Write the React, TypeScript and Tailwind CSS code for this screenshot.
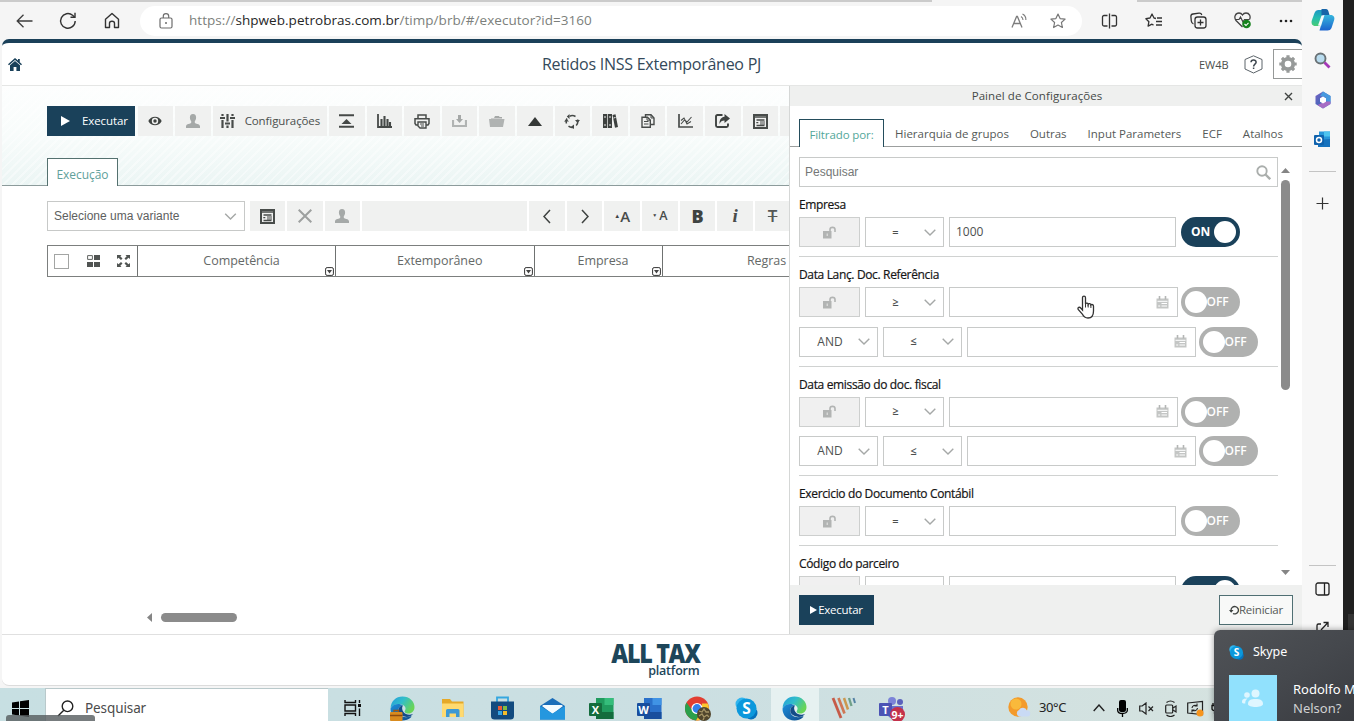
import React from "react";

type P = { children?: React.ReactNode; className?: string; w?: number; h?: number; vb?: string };

function Ic({ children, className = "", w = 16, h, vb }: P) {
  const hh = h ?? w;
  return (
    <svg width={w} height={hh} viewBox={vb ?? `0 0 ${w} ${hh}`} fill="none" className={`block shrink-0 ${className}`}>
      {children}
    </svg>
  );
}

/* ---------- shared icons ---------- */

const UserIcon = () => (
  <Ic w={16}>
    <path d="M8 1C5.8 1 4.8 2.6 4.9 4.6c.1 1.700.6 2.900 1.300 3.700v1.500C5.900 10.800 1 11 1 13.200V15h14v-1.800c0-2.200-4.900-2.400-5.200-3.400V8.300c.7-.8 1.200-2 1.300-3.700C11.200 2.600 10.200 1 8 1z" fill="#a5a9a8" />
  </Ic>
);

const FormIcon = () => (
  <Ic w={15}>
    <rect x="1" y="1" width="13" height="13" stroke="#484c4a" strokeWidth="2" />
    <path d="M1 3h13M3.500 6h8M3.500 11.500h8" stroke="#484c4a" strokeWidth="1.600" />
    <path d="M3.300 8.700h2M7 8h5M7 10h5" stroke="#484c4a" strokeWidth="1.200" />
  </Ic>
);

const Chevron = ({ w = 12 }: { w?: number }) => (
  <Ic w={w} h={7} vb="0 0 12 7">
    <path d="M.700 .700 6 6 11.300 .700" stroke="#a5a8a7" strokeWidth="1.400" />
  </Ic>
);

const LockIcon = () => (
  <Ic w={13} h={13}>
    <path d="M0 5h8.500v7.500H0z" fill="#b2b4b3" />
    <path d="M7 6V3.500C7 .700 12 .700 12 3.500V6" stroke="#b2b4b3" strokeWidth="1.600" />
    <path d="M4.200 7.500v2.500" stroke="#e8e8e8" />
  </Ic>
);

const CalendarIcon = () => (
  <Ic w={13} h={13}>
    <path d="M.500 2.500h12v10H.500z" fill="#c4c6c5" />
    <path d="M3.500 0v3.500M9.500 0v3.500" stroke="#b4b6b5" strokeWidth="1.600" />
    <path d="M1.500 5.300h10M5.500 7.500h5.500M5.500 10h5.500M2.200 10h2" stroke="#fff" strokeWidth="1" />
  </Ic>
);

/* ---------- browser chrome ---------- */

function BrowserBar() {
  return (
    <div className="flex h-[39px] w-[1302px] shrink-0 flex-col">
      <div className="flex h-[2px] justify-between">
        <div className="w-[932px] bg-[#cbcbcb]" />
        <div className="w-[165px] bg-[#cbcbcb]" />
      </div>
      <div className="flex h-[37px] items-center pl-[16px]">
        <Ic w={17} h={14} className="mr-[26px]">
          <path d="M7.500 .800 1.200 7l6.300 6.200M1.200 7H16.500" stroke="#3d3d3d" strokeWidth="1.300" />
        </Ic>
        <Ic w={18} className="mr-[27px]">
          <path d="M16.200 9A7.300 7.300 0 1 1 13.600 3.300L15.500 5" stroke="#333" strokeWidth="1.400" />
          <path d="M16 .800V5.300H11.500" stroke="#333" strokeWidth="1.400" />
        </Ic>
        <Ic w={16} h={17} className="mr-[20px]">
          <path d="M1.500 7.200 8 1.400l6.500 5.800v8.300h-4v-4.300c0-1.400-.700-2-2.500-2s-2.500.600-2.500 2v4.300h-4z" stroke="#333" strokeWidth="1.400" strokeLinejoin="round" />
        </Ic>
        <div className="flex h-[30px] w-[942px] items-center rounded-full bg-white pl-[19px]">
          <Ic w={14} h={16} className="mr-[16px]">
            <rect x="1" y="5" width="12" height="10" rx="1.500" stroke="#6d6d6d" strokeWidth="1.200" />
            <path d="M4.300 5V3.300a2.700 2.700 0 0 1 5.400 0V5" stroke="#6d6d6d" strokeWidth="1.200" />
            <circle cx="7" cy="10" r="1" fill="#6d6d6d" />
          </Ic>
          <div className="w-[822px] whitespace-nowrap font-['Open_Sans',sans-serif] text-[13.500px] tracking-[0.050px] text-[#7c7f7c]">
            https://<span className="text-[#262626]">shpweb.petrobras.com.br</span>/timp/brb/#/executor?id=3160
          </div>
          <Ic w={17} h={16} className="mr-[22px]">
            <path d="M1 14.500 5.600 3.500h.8L11 14.500M2.700 10.500h6.600" stroke="#7d7d7d" strokeWidth="1.300" />
            <path d="M10 3.500c1.400.8 2 2 2 3.500M11.500 1c2.500 1.200 3.500 3.300 3.400 6" stroke="#7d7d7d" strokeWidth="1.100" />
          </Ic>
          <Star />
        </div>
        <div className="ml-[19px] flex items-center gap-[27px]">
          <Ic w={17} h={16}>
            <path d="M6.500 2.500H3A1.500 1.500 0 0 0 1.500 4v7.500A1.500 1.500 0 0 0 3 13h3.500M10.500 2.500H14A1.500 1.500 0 0 1 15.500 4v7.500A1.500 1.500 0 0 1 14 13h-3.500M8.500 .500v15" stroke="#333" strokeWidth="1.300" />
          </Ic>
          <Ic w={18} h={16}>
            <path d="M11 5.500 9 5 7 1 5 5 .900 5.700l3 3-.8 4.500L7 11.200l1.500.9M12 5h5M11 8.500h6M11 12h6" stroke="#333" strokeWidth="1.300" strokeLinejoin="round" />
          </Ic>
          <Ic w={17} h={17}>
            <path d="M3.500 12C2 11.500 1.500 10.500 1.300 9L.900 4.500C.800 3 1.500 2.200 3 2l6-.9c1.500-.2 2.400.4 2.800 1.900" stroke="#333" strokeWidth="1.300" />
            <rect x="5" y="5" width="11" height="11" rx="2.500" stroke="#333" strokeWidth="1.300" />
            <path d="M10.500 7.500v6M7.500 10.500h6" stroke="#333" strokeWidth="1.300" />
          </Ic>
          <Ic w={18} h={17}>
            <path d="M8.500 15 2 8.500C-.500 5 1.500 1 5 1c1.600 0 2.800.8 3.500 2C9.200 1.800 10.400 1 12 1c3.500 0 5 3.500 3.500 6.500" stroke="#444" strokeWidth="1.300" />
            <path d="M1 7.500h4L6.500 5l2.500 5 1.500-2.500h5" stroke="#444" strokeWidth="1.200" />
            <circle cx="12.500" cy="12" r="4.300" fill="#16821d" />
            <path d="m10.500 12 1.500 1.500 2.500-2.700" stroke="#fff" strokeWidth="1.100" />
          </Ic>
          <Ic w={14} h={4}>
            <g fill="#222"><circle cx="2" cy="2" r="1.300" /><circle cx="7" cy="2" r="1.300" /><circle cx="12" cy="2" r="1.300" /></g>
          </Ic>
        </div>
      </div>
    </div>
  );
}

const Star = () => (
  <Ic w={16}>
    <path d="m8 1 2.100 4.600 5 .5-3.700 3.400 1 5L8 12l-4.400 2.500 1-5L.900 6.100l5-.5z" stroke="#777" strokeWidth="1.200" strokeLinejoin="round" />
  </Ic>
);

function EdgeSidebar() {
  return (
    <div className="flex h-[688px] w-[41px] shrink-0 flex-col items-center bg-[#f7f7f7] pt-[8px]">
      <Ic w={24} h={24}>
        <defs>
          <linearGradient id="cpA" x1="0" y1="0" x2="0" y2="1"><stop stopColor="#1c96c4" /><stop offset=".5" stopColor="#25bdb0" /><stop offset="1" stopColor="#48cc74" /></linearGradient>
          <linearGradient id="cpB" x1="0" y1="0" x2="0" y2="1"><stop stopColor="#37b6dd" /><stop offset="1" stopColor="#1b63cd" /></linearGradient>
        </defs>
        <path d="M7.500 2H16l-4.500 16H4.500C1 18 0 15.500 .800 12.500L3.500 5C4.300 3 5.500 2 7.500 2z" fill="url(#cpA)" />
        <path d="M10.500 1H15c1.500 0 2 1 2.500 2.500L18.500 7h-5l-3 8z" fill="#1765a8" />
        <path d="M16.500 22.500H8.500L13 7h6.500c3.500 0 4.500 2.500 3.500 5.500L20.500 20c-.8 1.700-2 2.500-4 2.500z" fill="url(#cpB)" />
        <path d="m10.500 7.500 3-.5-3.500 11-3-.5z" fill="#f2fbfc" />
      </Ic>
      <Ic w={17} className="mt-[20px]">
        <circle cx="6.500" cy="6.500" r="5" fill="#b9dcef" stroke="#697175" strokeWidth="1.900" />
        <path d="m10.500 10.500 5 5" stroke="#a438b8" strokeWidth="2.800" />
      </Ic>
      <Ic w={18} h={18} className="mt-[22px]">
        <defs><linearGradient id="m3" x1="0" y1="0" x2="1" y2="1"><stop stopColor="#7862c4" /><stop offset=".5" stopColor="#4a66bb" /><stop offset="1" stopColor="#52a6e8" /></linearGradient></defs>
        <path d="M9 .500 16.500 5v8L9 17.500 1.500 13V5z" fill="url(#m3)" />
        <path d="M9 .500 16.500 5v7l-5-2.500V6L6 5z" fill="#4799df" />
        <path d="M16.500 10.500V13L9 17.500 3.500 14l7.500-3.500z" fill="#a66cc4" />
        <path d="m9 5.500 3 1.800v3.500L9 12.500l-3-1.700V7.300z" fill="#fff" />
      </Ic>
      <Ic w={17} h={17} className="mt-[22px]">
        <path d="M5 .500h11v15H5z" fill="#2796da" /><path d="M10 .500h6v5h-6z" fill="#4cc3ef" /><path d="m4 9 12-1v8H4z" fill="#1672bd" />
        <rect x="0" y="4" width="10" height="10" rx="1" fill="#0f62ad" />
        <circle cx="5" cy="9" r="2.500" stroke="#fff" strokeWidth="1.500" />
      </Ic>
      <div className="mt-[23px] h-px w-[27px] bg-[#c4c4c4]" />
      <Ic w={13} className="mt-[25px]"><path d="M6.500 .500v12M.500 6.500h12" stroke="#333" strokeWidth="1.200" /></Ic>
      <div className="mt-[355px] h-px w-[27px] bg-[#c4c4c4]" />
      <Ic w={15} h={14} className="mt-[16px]">
        <rect x="1" y="1" width="13" height="12" rx="2" stroke="#222" strokeWidth="1.300" />
        <path d="M9.500 1v12" stroke="#222" strokeWidth="1.300" />
      </Ic>
      <Ic w={15} className="mt-[25px]">
        <path d="M6 3H3.500A1.500 1.500 0 0 0 2 4.500V14M8.500 1.500H13V6M13 1.500 6 9M13 9v4" stroke="#222" strokeWidth="1.300" />
      </Ic>
    </div>
  );
}

/* ---------- application: main area ---------- */

const Btn = ({ children, className = "w-[35.600px]" }: P) => (
  <div className={`flex h-[30px] shrink-0 items-center justify-center bg-[#f0f1f0] ${className}`}>{children}</div>
);

function ActionBar() {
  return (
    <div className="flex gap-[2px]">
      <div className="mr-[.500px] flex h-[30px] w-[88px] shrink-0 items-center bg-[#1a415a] pl-[14px]">
        <Ic w={9} h={10} className="mr-[12px]"><path d="M0 0v10l9-5z" fill="#fff" /></Ic>
        <span className="text-[11.500px] tracking-[-0.100px] text-white">Executar</span>
      </div>
      <Btn>
        <Ic w={14} h={10}>
          <path d="M.300 5C3-.800 11-.800 13.700 5 11 10.800 3 10.800 .300 5z" fill="#3f4341" />
          <circle cx="7" cy="5" r="3.200" fill="#f0f1f0" /><circle cx="7" cy="5" r="1.700" fill="#3f4341" />
        </Ic>
      </Btn>
      <Btn><UserIcon /></Btn>
      <Btn className="w-[114.400px] gap-[10px]">
        <Ic w={15} h={14}>
          <path d="M2.500 0v14M7.500 0v14M12.500 0v14" stroke="#484c4a" strokeWidth="2.200" />
          <path d="M0 4h5M5 9.500h5M10 4h5" stroke="#f0f1f0" strokeWidth="4" />
          <path d="M0 4h5M5 9.500h5M10 4h5" stroke="#484c4a" strokeWidth="2" />
        </Ic>
        <span className="text-[11.500px] tracking-[-0.100px] text-[#4b4f4d]">Configurações</span>
      </Btn>
      <Btn><Ic w={15} h={14}><path d="M0 1.300h15M0 12.700h15" stroke="#454947" strokeWidth="2" /><path d="m7.500 5 5 5h-10z" fill="#454947" /></Ic></Btn>
      <Btn><Ic w={15} h={14}><path d="M1 0v13h14" stroke="#454947" strokeWidth="1.800" /><path d="M4.500 5v7M7.500 2v10M10.500 5v7M13 8v4" stroke="#454947" strokeWidth="2.100" /></Ic></Btn>
      <Btn>
        <Ic w={16} h={15}>
          <path d="M4 4V1h8v3M4 11H2L1 9.500V4.700h14V9.500L14 11h-2" stroke="#484c4a" strokeWidth="1.500" />
          <path d="M4 8h8v6H6L4 12z" stroke="#484c4a" strokeWidth="1.400" /><path d="M6 10h4M7 12h3" stroke="#484c4a" />
        </Ic>
      </Btn>
      <Btn><Ic w={15} h={12}><path d="M1 5v6h13V5" stroke="#b1b4b3" strokeWidth="2.200" /><path d="M6 0h3v4h2L7.500 8 4 4h2z" fill="#a5a8a7" /></Ic></Btn>
      <Btn><Ic w={16} h={12}><path d="M0 4h15.500L14 12H1z" fill="#b0b3b2" /><path d="M2 3h3l1-2h4l.500 1H13v1.500H2z" fill="#a5a8a7" /></Ic></Btn>
      <Btn><Ic w={14} h={9}><path d="m7 0 7 9H0z" fill="#353937" /></Ic></Btn>
      <Btn>
        <Ic w={16} h={15}>
          <path d="M5.500 2.300a6 6 0 0 1 6 .2M13.500 5.500a6 6 0 0 1-1.300 6M9.500 13.200a6 6 0 0 1-5-1M2.500 9.500a6 6 0 0 1 .5-5" stroke="#454947" strokeWidth="1.500" />
          <path d="M5.500 0v5L2.800 2.500zM11 6h5l-2.500 3zM10 10.500V15l-3-2.300zM0 7.500h5L2.500 5z" fill="#454947" />
        </Ic>
      </Btn>
      <Btn>
        <Ic w={15} h={14}><path d="M0 0h4.300v14H0zM5 0h4v14H5zM9.500 1l3-.8L15 13l-3 .8z" fill="#3d413f" /><path d="M1 3h2M6 3h2M1 11h2M6 11h2M10.500 4l2-.5" stroke="#eef0ef" /></Ic>
      </Btn>
      <Btn>
        <Ic w={14} h={14}>
          <path d="M4.500 3V.800H10L13 4v6.500h-3" stroke="#484c4a" strokeWidth="1.400" /><path d="M1 3.200h5.500L9.300 6v7.200H1z" stroke="#484c4a" strokeWidth="1.400" />
          <path d="M3 7.500h4.500M3 10h4.500M6 3.500v2.700h3M10 1v3h3" stroke="#484c4a" />
        </Ic>
      </Btn>
      <Btn><Ic w={15} h={14}><path d="M1 0v13h14" stroke="#484c4a" strokeWidth="1.700" /><path d="m3 10 3.500-4 2.500 2L13.500 3M3 6.500 6 4l3 6 4-2.500" stroke="#484c4a" strokeWidth="1.100" /></Ic></Btn>
      <Btn>
        <Ic w={15} h={14}><path d="M7.500 1H2.500Q1 1 1 2.500v9Q1 13 2.500 13h9q1.500 0 1.500-1.500V9.500" stroke="#3f4341" strokeWidth="1.900" /><path d="M9.500 0 15 4.500 9.500 9V6.500C7 6.500 5.500 7.500 4.500 10 4.300 6 6 3 9.500 2.700z" fill="#3f4341" /></Ic>
      </Btn>
      <Btn><FormIcon /></Btn>
      <Btn />
    </div>
  );
}

function VariantBar() {
  return (
    <div className="flex gap-[2px]">
      <div className="mr-[3px] flex h-[30px] w-[197.500px] shrink-0 items-center justify-between border border-[#c7c9c8] bg-white pl-[6px] pr-[6px]">
        <span className="font-['Liberation_Sans',sans-serif] text-[12px] text-[#5d605e]">Selecione uma variante</span>
        <Chevron w={15} />
      </div>
      <Btn><FormIcon /></Btn>
      <Btn><Ic w={14}><path d="m.700 .700 12.600 12.600M13.300 .700 .700 13.300" stroke="#9da09f" strokeWidth="2" /></Ic></Btn>
      <Btn><UserIcon /></Btn>
      <Btn className="w-[165px]" />
      <Btn><Ic w={8} h={15}><path d="M7 1 1 7.500 7 14" stroke="#3f4341" strokeWidth="1.500" /></Ic></Btn>
      <Btn><Ic w={8} h={15}><path d="m1 1 6 6.500L1 14" stroke="#3f4341" strokeWidth="1.500" /></Ic></Btn>
      <Btn><span className="text-[6px] text-[#3f4341]">▲</span><span className="text-[15px] font-semibold text-[#484c4a]">A</span></Btn>
      <Btn><span className="mr-[2px] text-[5px] text-[#3f4341]">▼</span><span className="text-[12.500px] font-semibold text-[#484c4a]">A</span></Btn>
      <Btn><span className="text-[18px] font-extrabold text-[#3f4341]">B</span></Btn>
      <Btn><span className="font-['Liberation_Serif',serif] text-[19px] font-bold italic text-[#484c4a]">i</span></Btn>
      <Btn><span className="text-[17px] font-semibold text-[#555856] line-through decoration-[1px]">T</span></Btn>
    </div>
  );
}

const Head = ({ children, className = "" }: P) => (
  <div className={`relative flex shrink-0 items-center justify-center border-r border-[#6f7271] pr-[-9px] ${className}`}>
    <span className="text-[12.500px] tracking-[-0.050px] text-[#656967]">{children}</span>
    <Ic w={9} h={9} className="absolute bottom-0 right-[1px]">
      <rect x=".6" y=".6" width="7.800" height="7.800" rx="1.500" stroke="#333" /><path d="M2 3h5L4.500 6.500z" fill="#444" />
    </Ic>
  </div>
);

function GridHeader() {
  return (
    <div className="flex h-[32px] w-[850px] border border-[#7c7f7e]">
      <div className="flex w-[90px] shrink-0 items-center border-r border-[#6f7271] pl-[6px]">
        <div className="mr-[18px] h-[15px] w-[15px] border border-[#a3a5a4] bg-white" />
        <Ic w={13} h={12} className="mr-[17px]"><path d="M7 0h6v5H7zM0 7h6v5H0zM7 7h6v5H7z" fill="#505452" /><path d="M.600 .600h4.800v3.800H.600z" stroke="#606462" /></Ic>
        <Ic w={13} h={12}>
          <path d="M0 0h4.500L3.300 1.200 5.500 3.500 4 5 1.500 2.700 0 4zM13 0H8.500l1.200 1.200L7.500 3.500 9 5l2.500-2.300L13 4zM0 12h4.500l-1.200-1.200L5.500 8.500 4 7 1.500 9.300 0 8zM13 12H8.500l1.200-1.200L7.500 8.500 9 7l2.500 2.300L13 8z" fill="#505452" />
        </Ic>
      </div>
      <Head className="w-[198px] pl-[10px]">Competência</Head>
      <Head className="w-[198.500px] pl-[10px]">Extemporâneo</Head>
      <Head className="w-[128px] pl-[10px]">Empresa</Head>
      <Head className="w-[209px]">Regras</Head>
    </div>
  );
}

function MainArea() {
  return (
    <div className="flex w-[787px] shrink-0 flex-col overflow-hidden">
      <div className="flex h-[100px] shrink-0 flex-col justify-between border-b border-[#8c9b9b] bg-[repeating-linear-gradient(135deg,transparent_0_4px,#ffffff66_4px_6px),linear-gradient(#fdfefe,#f8fcfb_50%,#ebf5f4)] pl-[45px] pt-[20px]">
        <ActionBar />
        <div className="-mb-px flex h-[28px] w-[71px] items-center justify-center border border-b-0 border-[#54716f] bg-white pt-[4px] text-[12px] tracking-[-0.050px] text-[#60a19b]">Execução</div>
      </div>
      <div className="flex flex-col gap-[14px] pl-[45px] pt-[15px]">
        <VariantBar />
        <GridHeader />
      </div>
      <div className="mt-auto flex items-center gap-[9px] pb-[12px] pl-[145px]">
        <Ic w={5} h={9}><path d="M5 0v9L0 4.500z" fill="#858585" /></Ic>
        <div className="h-[9px] w-[76px] rounded-full bg-[#8b8b8b]" />
      </div>
    </div>
  );
}

/* ---------- application: settings panel ---------- */

const Toggle = ({ on = false }: { on?: boolean }) =>
  on ? (
    <div className="flex h-[30px] w-[59px] shrink-0 items-center justify-between rounded-full bg-[#1a415a] pl-[10px] pr-[4px]">
      <span className="text-[12px] font-bold text-white">ON</span>
      <div className="h-[22px] w-[22px] rounded-full bg-white" />
    </div>
  ) : (
    <div className="flex h-[30px] w-[59px] shrink-0 items-center rounded-full bg-[#b0b1b0] pl-[3.500px]">
      <div className="h-[22px] w-[22px] rounded-full bg-white" />
      <span className="text-[12px] font-semibold text-white">OFF</span>
    </div>
  );

const Sel = ({ children, wide = false }: { children?: React.ReactNode; wide?: boolean }) => (
  <div className="mr-[5px] flex h-[30px] w-[79px] shrink-0 items-center border border-[#c8cac9] bg-white pr-[7px]">
    <span className={`flex-1 text-center text-[#4d504f] ${wide ? "pl-[2px] text-[12px]" : "pl-[1px] text-[11px] font-semibold"}`}>{children}</span>
    <Chevron />
  </div>
);

const Lock = () => (
  <div className="mr-[5px] flex h-[30px] w-[61px] shrink-0 items-center justify-center border border-[#cdcfce] bg-[#f0f0f0]"><LockIcon /></div>
);

const Field = ({ date = false, value = "" }: { date?: boolean; value?: string }) => (
  <div className={`flex h-[30px] shrink-0 items-center border border-[#c8cac9] bg-white px-[6px] text-[12px] text-[#4d504f] ${date ? "mr-[3px] w-[229px] justify-end pr-[8px]" : "mr-[5px] w-[227px]"}`}>
    {value}
    {date && <CalendarIcon />}
  </div>
);

type SectionProps = { label: string; op: string; value?: string; on?: boolean; range?: boolean };

function Section({ label, op, value, on, range = false }: SectionProps) {
  return (
    <div className={`w-[479px] shrink-0 border-b border-[#d0d2d1] ${range ? "h-[109.500px]" : "h-[70px]"}`}>
      <div className="flex h-[30px] items-end pb-[3px] text-[12px] leading-[18px] tracking-[-0.350px] text-[#151515] [-webkit-text-stroke:0.200px_#151515]">{label}</div>
      <div className="flex">
        <Lock />
        <Sel>{op}</Sel>
        <Field date={range} value={value} />
        <Toggle on={on} />
      </div>
      {range && (
        <div className="mt-[9.500px] flex">
          <Sel wide>AND</Sel>
          <Sel>≤</Sel>
          <Field date />
          <Toggle />
        </div>
      )}
    </div>
  );
}

function SettingsPanel() {
  return (
    <div className="flex w-[513px] shrink-0 flex-col border-l border-[#d5d7d6] bg-white">
      <div className="flex h-[20px] shrink-0 items-center bg-[#eff0ef]">
        <span className="flex-1 text-center text-[11.500px] tracking-[0.080px] text-[#454947]">Painel de Configurações</span>
        <Ic w={9} className="mr-[9px]"><path d="m1 1 7 7M8 1 1 8" stroke="#3f4341" strokeWidth="1.400" /></Ic>
      </div>
      <div className="flex h-[41px] shrink-0 items-end border-b border-[#9c9f9e] pl-[9px] text-[11.500px] text-[#555957]">
        <div className="-mb-px flex h-[28px] w-[85px] shrink-0 items-center justify-center border border-b-0 border-[#244d5c] bg-white pt-[2px] tracking-[-0.100px] text-[#53a79a]">Filtrado por:</div>
        <div className="flex h-[28px] items-center gap-[21px] whitespace-nowrap pl-[11px] pt-[3px]">
          <span>Hierarquia de grupos</span>
          <span>Outras</span>
          <span>Input Parameters</span>
          <span>ECF</span>
          <span>Atalhos</span>
        </div>
      </div>
      <div className="flex h-[438px] shrink-0 overflow-hidden pl-[9px] pt-[10px]">
        <div className="flex w-[479px] shrink-0 flex-col">
          <div className="flex h-[30px] w-[479px] shrink-0 items-center justify-between border border-[#c8cac9] bg-white pl-[5px] pr-[6px]">
            <span className="font-['Liberation_Sans',sans-serif] text-[12px] text-[#747776]">Pesquisar</span>
            <Ic w={15}><circle cx="6" cy="6" r="4.700" stroke="#aaaeac" strokeWidth="1.900" /><path d="m9.500 9.500 4.700 4.700" stroke="#aaaeac" strokeWidth="2.400" /></Ic>
          </div>
          <Section label="Empresa" op="=" value="1000" on />
          <Section label="Data Lanç. Doc. Referência" op="≥" range />
          <Section label="Data emissão do doc. fiscal" op="≥" range />
          <Section label="Exercicio do Documento Contábil" op="=" />
          <Section label="Código do parceiro" op="=" on />
        </div>
        <div className="ml-[3px] flex h-[428px] flex-col items-center pb-[10px] pt-[11px]">
          <Ic w={9} h={5}><path d="m4.500 0 4.500 5H0z" fill="#858585" /></Ic>
          <div className="mt-[7px] h-[210px] w-[9px] rounded-full bg-[#8b8b8b]" />
          <Ic w={9} h={5} className="mt-auto"><path d="m4.500 5 4.500-5H0z" fill="#858585" /></Ic>
        </div>
      </div>
      <div className="flex h-[49px] shrink-0 items-center justify-between bg-[#eff0ef] pl-[9px] pr-[9px]">
        <div className="flex h-[30px] w-[75px] items-center justify-center bg-[#1a415a] text-[11.500px] tracking-[-0.250px] text-white">
          <Ic w={7} h={8} className="mr-[1px]"><path d="M0 0v8l7-4z" fill="#fff" /></Ic>Executar
        </div>
        <div className="flex h-[30px] w-[74px] items-center justify-center border border-[#4f6f73] bg-[#f8f9f8] text-[11.500px] tracking-[-0.200px] text-[#555957]">
          <Ic w={10} h={10}><path d="M2 6.500V5a3.700 3.700 0 1 1 2 3.500" stroke="#3f4341" strokeWidth="1.300" /><path d="M0 5h4.500L2.200 7.800z" fill="#3f4341" /></Ic>Reiniciar
        </div>
      </div>
    </div>
  );
}

function AppHeader() {
  return (
    <div className="flex h-[43px] shrink-0 items-center border-b border-[#e5e6e5] pl-[6px]">
      <Ic w={14} h={13}>
        <path d="M7 0 0 6.200l1 1L7 2l6 5.200 1-1-2.200-2V1H10v1.600z" fill="#1a415a" /><path d="M7 3 2 7.300V13h3.600V9h2.800v4H12V7.300z" fill="#1a415a" />
      </Ic>
      <div className="flex-1 pl-[82px] text-center text-[16px] tracking-[-0.250px] text-[#34495a]">Retidos INSS Extemporâneo PJ</div>
      <div className="flex w-[103px] items-center">
        <span className="w-[46px] pt-[3px] text-[11px] text-[#4b4f4d]">EW4B</span>
        <Ic w={19} h={19} className="mr-[10px]">
          <path d="M9.500 .800 18 4.500v9.500l-8.500 4L1 14V4.500z" stroke="#5c646a" strokeWidth="1" />
          <path d="M7 7.300c.100-3.200 5.300-3 5.100.1-.1 1.700-2.500 1.800-2.500 4M9.600 12.600V14" stroke="#3f4850" strokeWidth="1.500" />
        </Ic>
        <div className="flex h-[30px] w-[29px] items-center justify-center border border-r-0 border-[#969998]">
          <Ic w={18} h={18}>
            <circle cx="9" cy="9" r="5.200" stroke="#979a99" strokeWidth="3.800" />
            <path d="M9 .300v3M9 14.700v3M.300 9h3M14.700 9h3M2.900 2.900l2 2M13.100 13.100l2 2M2.900 15.100l2-2M13.100 4.900l2-2" stroke="#979a99" strokeWidth="3.200" />
          </Ic>
        </div>
      </div>
    </div>
  );
}

/* ---------- taskbar ---------- */

const EdgeLogo = ({ bag = false }: { bag?: boolean }) => (
  <Ic w={25} h={25}>
    <defs>
      <linearGradient id="edA" x1="0" y1="0" x2="1" y2=".5"><stop stopColor="#249cdb" /><stop offset=".5" stopColor="#31bdcb" /><stop offset="1" stopColor="#69d557" /></linearGradient>
      <linearGradient id="edB" x1="0" y1="0" x2="1" y2="1"><stop stopColor="#1c8edb" /><stop offset="1" stopColor="#114d8d" /></linearGradient>
    </defs>
    <path d="M.600 12C1 5 6 .500 12.500 .500c7 0 12 5 12 10.500 0 4-2.700 6.500-6 6.500-3.500 0-4.500-1.500-3.500-3 .8-1.300.8-2.500 0-3.700C12.500 7 4 7 .600 12z" fill="url(#edA)" />
    <path d="M.500 12.500C3 7.500 9.500 7 13 9.500c-4 .5-5.500 3.700-4.500 7 1.200 4 6.500 6 12 3.800.8-.3 1.200.2.600.9C18.500 23.600 15.700 24.500 12.500 24.500 5.500 24.500.300 19 .500 12.500z" fill="url(#edB)" />
    <path d="M8.500 16.500C7.500 12.500 10 9.500 13 9.500c-1.500 2-1 4.500.5 6.500 2 2.500 5.500 3.700 9.500 2-2 2.500-5.500 3.500-8.500 2.500-3.500-1-5.500-2.500-6-4z" fill="#134b88" />
    {bag && (
      <g>
        <rect x="0" y="16" width="12.500" height="9" rx="1" fill="#d98b1e" /><path d="M0 19.500h12.500" stroke="#8d4b10" strokeWidth="1.500" /><path d="M4 16v-1.500h4.500V16" stroke="#9d5714" strokeWidth="1.300" />
      </g>
    )}
  </Ic>
);

const Office = ({ c, letter, dark, light }: { c: string; letter: string; dark: string; light: string }) => (
  <Ic w={25} h={23}>
    <path d="M7 1h17.500v21H7z" fill={c} /><path d="M15.500 1H24.500v7h-9z" fill={light} /><path d="M7 15h17.500v7H7z" fill={dark} />
    <rect x="0" y="6" width="13" height="13" rx="1" fill={dark} />
    <text x="6.500" y="16.500" textAnchor="middle" fontSize="11" fontWeight="700" fontFamily="Open Sans" fill="#fff">{letter}</text>
  </Ic>
);

const SkypeLogo = ({ w = 23 }: { w?: number }) => (
  <Ic w={w} vb="0 0 23 23">
    <circle cx="7" cy="7" r="6.500" fill="#31b5ee" /><circle cx="16" cy="16" r="6.500" fill="#0572bd" /><circle cx="11.500" cy="11.500" r="10" fill="#0b98dc" />
    <text x="11.500" y="17" textAnchor="middle" fontSize="15.500" fontWeight="700" fontFamily="Open Sans" fill="#fff">S</text>
  </Ic>
);

const Slot = ({ children, className = "" }: P) => (
  <div className={`flex h-full w-[48.500px] shrink-0 items-center justify-center pt-[7px] ${className}`}>{children}</div>
);

function Taskbar() {
  return (
    <div className="flex h-[33px] w-[1343px] shrink-0 overflow-hidden bg-gradient-to-r from-[#c7dfe2] via-[#cbdfe2] to-[#d7e3df]">
      <div className="flex w-[45px] shrink-0 items-center pl-[12px] pt-[8px]">
        <Ic w={17} h={17}><path d="M0 2.500 7 1.500V8H0zM8 1.300 17 0v8H8zM0 9h7v6.500l-7-1zM8 9h9v8l-9-1.300z" fill="#000" /></Ic>
      </div>
      <div className="flex w-[283px] shrink-0 items-center border-l border-t border-[#b9c9cb] bg-white pl-[11px] pt-[7px]">
        <Ic w={17} h={17} className="mr-[11px]"><circle cx="10.500" cy="6.300" r="5.300" stroke="#222" strokeWidth="1.400" /><path d="M6.800 10.200 1 16" stroke="#222" strokeWidth="1.400" /></Ic>
        <span className="font-['Noto_Sans',sans-serif] text-[13.500px] tracking-[-0.100px] text-[#4b4b4b]">Pesquisar</span>
      </div>
      <Slot>
        <Ic w={17} h={16}><path d="M1 0v2.500h10.500V0M1 16v-2.500h10.500V16M1 5h10.500v6H1zM15.500 0v3M15.500 8.500V16" stroke="#111" strokeWidth="1.400" /><path d="M14 4h3v3h-3z" fill="#111" /></Ic>
      </Slot>
      <Slot className="w-[52px]"><EdgeLogo bag /></Slot>
      <Slot className="w-[45px]">
        <Ic w={22} h={20}><path d="M0 1h8l2 2.500h11.500V19H0z" fill="#e6a928" /><path d="M0 5.500h21.500V19H0z" fill="#ffda70" /><path d="M4 19v-6.500Q4 11 5.500 11h10.500q1.500 0 1.500 1.500V19h-3.500v-3.500H7.500V19z" fill="#3e99d3" /></Ic>
      </Slot>
      <Slot className="w-[51px]">
        <Ic w={23} h={24}><path d="M6 6V1.500h11V6" stroke="#35a7df" strokeWidth="1.800" /><path d="M0 5.500h23V20q0 3.500-3.500 3.500h-16Q0 23.500 0 20z" fill="#134b7f" /><path d="M7 10h4v4H7z" fill="#ed5b35" /><path d="M12 10h4v4h-4z" fill="#80bc42" /><path d="M7 15h4v4H7z" fill="#35a4e4" /><path d="M12 15h4v4h-4z" fill="#f5bd2b" /></Ic>
      </Slot>
      <Slot className="w-[47px]">
        <Ic w={25} h={23}><path d="M0 9 12.500 1 25 9v13.500H0z" fill="#1c6eb9" /><path d="M2 9h21L12.500 17z" fill="#f4fbff" /><path d="M0 9l12.500 7.500L25 9v13.500H0z" fill="#2597df" /><path d="m2 8 10.500 7.500L23 8z" fill="#f4fbff" /></Ic>
      </Slot>
      <Slot className="w-[49px]"><Office c="#209b5e" letter="X" dark="#146c3d" light="#35bd7b" /></Slot>
      <Slot className="w-[48px]"><Office c="#2a70ca" letter="W" dark="#194e9d" light="#4093e5" /></Slot>
      <Slot className="w-[49px]">
        <Ic w={26} h={25}>
          <circle cx="12" cy="12.500" r="12" fill="#e23e31" />
          <path d="M1.500 6.500A12 12 0 0 0 11 24.400L16.500 15 12 12.500 7 14z" fill="#2ba04c" /><path d="M22.800 7.500A12 12 0 0 1 11 24.400L17 15V7.500z" fill="#fbc82e" />
          <circle cx="12" cy="12.500" r="5.600" fill="#fff" /><circle cx="12" cy="12.500" r="4.400" fill="#3380ec" />
          <circle cx="19" cy="18" r="7" fill="#51462d" /><path d="m14 15 3 1 2-3 2 3 3 0M14 20l3-2 2 3 3-2 2 2M18 24l1-2" stroke="#a59465" strokeWidth="1.300" />
        </Ic>
      </Slot>
      <Slot className="w-[48px]"><SkypeLogo /></Slot>
      <Slot className="w-[47px] bg-[#e6f1f1]"><EdgeLogo /></Slot>
      <Slot className="w-[49px]">
        <Ic w={25} h={23}><path d="m2 1 8 20" stroke="#c65a48" strokeWidth="2.800" /><path d="m7.500 1 6 15.500" stroke="#cf7755" strokeWidth="2.700" /><path d="m13 1 4 11.500" stroke="#cb984f" strokeWidth="2.500" /><path d="m18 1 2.500 8" stroke="#70a088" strokeWidth="2.300" /><path d="m22.500 1 1.500 5" stroke="#5582a5" strokeWidth="2" /></Ic>
      </Slot>
      <Slot className="w-[49px]">
        <Ic w={27} h={25}>
          <circle cx="13" cy="5" r="4" fill="#7b83d8" /><circle cx="21" cy="6" r="3" fill="#5b62bd" /><path d="M8 10h16v8q-3 5-8 5-6 0-8-5z" fill="#6970cc" />
          <rect x="0" y="7" width="13" height="13" rx="1" fill="#4b53b5" /><text x="6.500" y="17.500" textAnchor="middle" fontSize="11" fontWeight="700" fontFamily="Open Sans" fill="#fff">T</text>
          <circle cx="18.500" cy="18.500" r="7.500" fill="#c4314b" /><text x="18.500" y="22.500" textAnchor="middle" fontSize="10.500" fontWeight="700" fontFamily="Open Sans" fill="#fff">9+</text>
        </Ic>
      </Slot>
      <div className="ml-[91px] flex items-center pt-[7px]">
        <Ic w={23} h={22} className="mr-[8px]"><circle cx="10" cy="10" r="9.700" fill="#f39a2b" /><circle cx="8" cy="7" r="5.500" fill="#f9b93b" /><path d="M11 19.500a3.500 3.500 0 0 1 0-6.500 4.500 4.500 0 0 1 8 .5 3 3 0 0 1 .5 6z" fill="#c9daf5" /></Ic>
        <span className="w-[54px] font-['Noto_Sans',sans-serif] text-[13px] tracking-[-0.400px] text-[#222]">30°C</span>
        <Ic w={12} h={8} className="mr-[12px]"><path d="m.700 7 5.300-6 5.300 6" stroke="#222" strokeWidth="1.400" /></Ic>
        <Ic w={11} h={17} className="mr-[11px]"><rect x="2" y="0" width="7" height="12" rx="2" fill="#000" /><path d="M.700 8v2.500c0 4 9.600 4 9.600 0V8M5.500 13v4" stroke="#000" strokeWidth="1.300" /></Ic>
        <Ic w={15} h={13} className="mr-[11px]"><path d="M.700 4h2.500L7 1v11L3.200 9H.700zM9.500 4.500l4.500 4.500M14 4.500 9.500 9" stroke="#222" strokeWidth="1.200" /></Ic>
        <Ic w={12} h={17} className="mr-[10px]"><rect x=".7" y="5" width="7" height="8" rx="1" stroke="#222" strokeWidth="1.200" /><path d="M8 8l3-2v6l-3-2M1.500 2.500q4-3 8 0M1.500 15q4 3 8 0" stroke="#222" strokeWidth="1.200" /></Ic>
        <Ic w={17} h={17} className="mr-[7px]"><path d="M.700 3 15.500 1.500v13L.700 13z" stroke="#222" strokeWidth="1.200" /><path d="M5 8a3 3 0 0 1 5-2M10.500 8a3 3 0 0 1-5 2M10 3.500V6H7.500M5 12.500V10h2.500" stroke="#222" strokeWidth="1.100" /><circle cx="13" cy="13" r="3.500" fill="#f7941d" /></Ic>
        <Ic w={14} h={13}><path d="M1 3.500h5v3q0 2-2.500 2T1 6.500zM2 1v2.500M5 1v2.500M3.500 8.500V11H5M7 3h7v8H6" stroke="#111" strokeWidth="1.300" /><path d="M8 5h6v4H8z" fill="#111" /></Ic>
      </div>
    </div>
  );
}

function Toast() {
  return (
    <div className="absolute left-[1214px] top-[630px] h-[91px] w-[150px] rounded-tl-[6px] bg-gradient-to-br from-[#505357] via-[#45484d] to-[#393b40] font-['Noto_Sans',sans-serif] shadow-[0_0_6px_#0006]">
      <div className="flex h-[44px] items-center gap-[9px] pl-[15px]">
        <SkypeLogo w={15} />
        <span className="text-[12.500px] tracking-[-0.100px] text-white">Skype</span>
      </div>
      <div className="flex gap-[16px] pl-[15px] pt-[1px]">
        <div className="flex h-[46px] w-[48px] shrink-0 items-center justify-center bg-[#91e1fd]">
          <Ic w={22} h={19}><g fill="#dff6ff"><circle cx="13.500" cy="4.500" r="4" /><path d="M6 15c0-4 3-5 7.500-5s7.500 1 7.500 5-15 4-15 0z" /><circle cx="5" cy="6" r="2.800" /><path d="M0 13c0-3 2-3.500 5.500-3.500-2 1.500-2.300 3-2.200 5C1 14.500 0 14 0 13z" /></g></Ic>
        </div>
        <div className="whitespace-nowrap pt-[5px] text-[13px] leading-[19px]">
          <div className="text-white">Rodolfo M</div>
          <div className="text-[#d0d1d2]">Nelson?</div>
        </div>
      </div>
    </div>
  );
}

export default function App() {
  return (
    <div className="relative flex h-[721px] w-[1354px] overflow-hidden bg-[#202020] font-['Open_Sans',sans-serif]">
      <div className="flex w-[1343px] shrink-0 flex-col bg-[#f7f7f7]">
        <div className="flex h-[688px] shrink-0">
          <div className="flex w-[1302px] shrink-0 flex-col bg-[#f5f5f5]">
            <BrowserBar />
            <div className="ml-[2px] flex h-[647px] w-[1300px] flex-col overflow-hidden rounded-[7px] border-b border-t-4 border-b-[#dcdcdc] border-t-[#1b4059] bg-white">
              <AppHeader />
              <div className="flex h-[549px] shrink-0 border-b border-[#e0e0e0]">
                <MainArea />
                <SettingsPanel />
              </div>
              <div className="flex flex-1 justify-center">
                <div className="flex h-full w-[95px] flex-col items-end pt-[4px] text-[#1d465a]">
                  <div className="origin-right scale-x-[.86] whitespace-nowrap text-[27px] font-extrabold leading-[28px] tracking-[-1.500px]">ALL TAX</div>
                  <div className="-mt-[3px] text-[12.500px] font-semibold leading-[14px] tracking-[-0.200px]">platform</div>
                </div>
              </div>
            </div>
          </div>
          <EdgeSidebar />
        </div>
        <Taskbar />
      </div>
      <div className="absolute left-[1348px] top-[614px] h-[16px] w-[6px] bg-[#343434]" />
      <Toast />
      <div className="absolute left-[6px] top-[715px] h-[6px] w-[89px] rounded-t-[3px] bg-[#555b5ecc]" />
      <Ic w={18} h={24} className="absolute left-[1077px] top-[295px]">
        <path d="M5.500 15V2.700C5.500.500 8.500.500 8.500 2.700V9c.5-1.300 2.700-1 2.700.3.700-1.200 2.700-.8 2.700.6.900-.9 2.600-.2 2.600 1.300V16c0 4.500-2 7-5.500 7-3.300 0-4.500-1.500-5.700-4L1.200 14.500C.300 12.500 2.500 11.500 3.700 13z" fill="#fff" stroke="#333" strokeWidth="1.300" />
        <path d="M8.500 9v3.500M11.200 9.500v3M13.900 10v3" stroke="#333" />
      </Ic>
    </div>
  );
}
